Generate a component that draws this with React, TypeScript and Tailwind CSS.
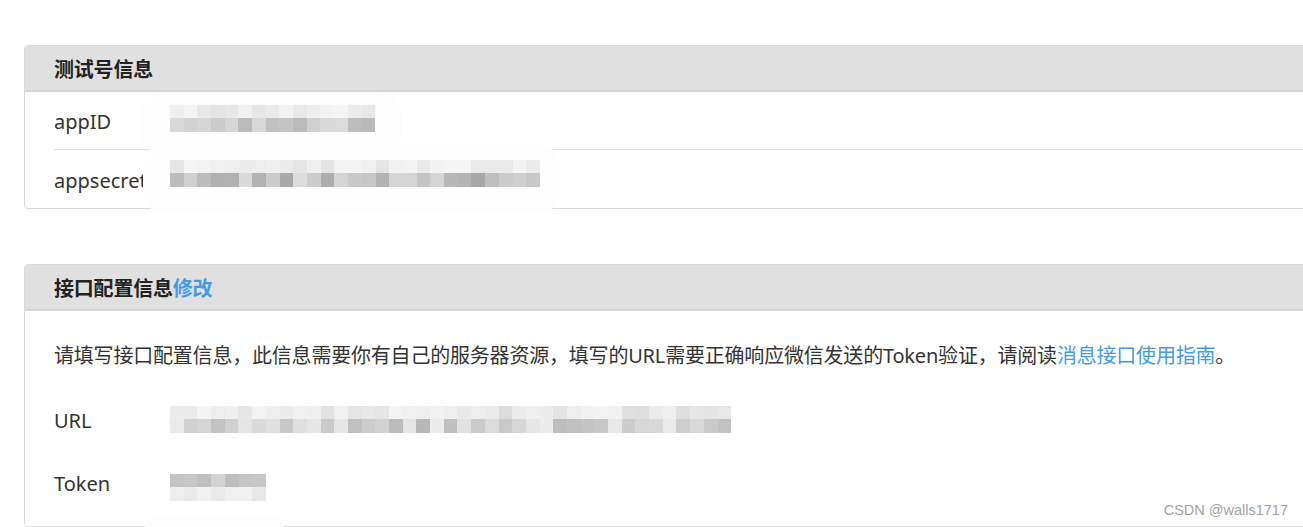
import React from "react";

// deterministic grey blocks to stand in for the mosaic-blurred values
function greys(count: number, seed: number, lo: number, hi: number): string[] {
  const out: string[] = [];
  let s = seed;
  for (let i = 0; i < count; i++) {
    s = (s * 9301 + 49297) % 233280;
    const v = Math.round(lo + (s / 233280) * (hi - lo));
    const h = v.toString(16).padStart(2, "0");
    out.push(`#${h}${h}${h}`);
  }
  return out;
}

function Mosaic({ width, count, seed, top, bottom, className = "" }: {
  width: number;
  count: number;
  seed: number;
  top: [number, number];
  bottom: [number, number];
  className?: string;
}) {
  const rows = [greys(count, seed, top[0], top[1]), greys(count, seed + 7, bottom[0], bottom[1])];
  return (
    <div className={`flex flex-col ${className}`} style={{ width }}>
      {rows.map((row, r) => (
        <div key={r} className={`flex ${r === 0 ? "h-[13px]" : "h-[14px]"}`}>
          {row.map((c, i) => (
            <div key={i} className="flex-1" style={{ backgroundColor: c }} />
          ))}
        </div>
      ))}
    </div>
  );
}

export default function App() {
  return (
    <div
      className="relative w-[1303px] h-[527px] overflow-hidden bg-white text-[#333] text-[20px]"
      style={{ fontFamily: '"Noto Sans", "Noto Sans CJK SC", sans-serif' }}
    >
      <div className="ml-[24px] pt-[45px] w-[1320px]">
        {/* 测试号信息 */}
        <div className="border border-[#d9d9d9] rounded-[4px] overflow-hidden">
          <div className="h-[46px] bg-[#e0e0e0] border-b-2 border-[#d4d4d4] flex items-center pl-[29px] pt-[3px]">
            <span className="font-bold text-[#222] tracking-[-0.2px]">测试号信息</span>
          </div>
          <div className="pl-[29px]">
            <div className="h-[58px] flex items-center border-b border-[#e3e3e3]">
              <span className="w-[116px] shrink-0 pt-[3px]">appID</span>
              <Mosaic width={205} count={15} seed={11} top={[0xe2, 0xf6]} bottom={[0xb2, 0xdc]} className="-mt-[6px]" />
            </div>
            <div className="h-[58px] flex items-center">
              <span className="w-[116px] shrink-0 whitespace-nowrap pt-[3px]">appsecret</span>
              <Mosaic width={370} count={27} seed={23} top={[0xe2, 0xf6]} bottom={[0xa6, 0xdc]} className="-mt-[10px]" />
            </div>
          </div>
        </div>

        {/* 接口配置信息 */}
        <div className="mt-[55px] border border-[#d9d9d9] rounded-[4px] overflow-hidden">
          <div className="h-[46px] bg-[#e0e0e0] border-b-2 border-[#d4d4d4] flex items-center pl-[29px] pt-[3px]">
            <span className="font-bold text-[#222] tracking-[-0.2px]">
              接口配置信息<span className="text-[#459ae8]">修改</span>
            </span>
          </div>
          <div className="pl-[29px] pt-[30px] pb-[27px]">
            <p className="h-[30px] leading-[30px] tracking-[-0.2px] whitespace-nowrap">
              请填写接口配置信息，此信息需要你有自己的服务器资源，填写的URL需要正确响应微信发送的Token验证，请阅读
              <span className="text-[#459ae8]">消息接口使用指南</span>。
            </p>
            <div className="mt-[35px] h-[30px] flex items-center">
              <span className="w-[116px] shrink-0">URL</span>
              <Mosaic width={561} count={41} seed={37} top={[0xdc, 0xf4]} bottom={[0xb8, 0xec]} className="-mt-[3px]" />
            </div>
            <div className="mt-[33px] h-[30px] flex items-center">
              <span className="w-[116px] shrink-0">Token</span>
              <Mosaic width={96} count={7} seed={51} top={[0xbc, 0xdc]} bottom={[0xe6, 0xf4]} className="mt-[6px]" />
            </div>
          </div>
        </div>
      </div>

      {/* soft white smudges left by the blur tool */}
      <div className="absolute left-[140px] top-[93px] w-[262px] h-[60px] rounded-[22px] bg-[#fdfdfd]/80" />
      <div className="absolute left-[143px] top-[144px] w-[417px] h-[70px] rounded-[22px] bg-[#fdfdfd]" />
      <div className="absolute left-[143px] top-[514px] w-[142px] h-[20px] rounded-t-[20px] bg-[#fdfdfd]" />
      {/* re-draw values above the smudges */}
      <Mosaic width={205} count={15} seed={11} top={[0xe2, 0xf6]} bottom={[0xb2, 0xdc]} className="absolute left-[170px] top-[105px]" />
      <Mosaic width={370} count={27} seed={23} top={[0xe2, 0xf6]} bottom={[0xa6, 0xdc]} className="absolute left-[170px] top-[160px]" />

      <div
        className="absolute right-[15px] bottom-[5px] text-[14.5px] text-[#a3a3a3]"
        style={{ fontFamily: '"Liberation Sans", Arial, sans-serif' }}
      >
        CSDN @walls1717
      </div>
    </div>
  );
}
